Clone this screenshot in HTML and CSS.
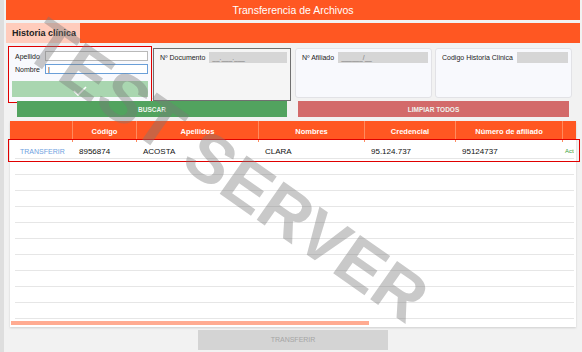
FILE: index.html
```html
<!DOCTYPE html>
<html lang="es">
<head>
  <meta charset="UTF-8">
  <title>Transferencia de Archivos</title>
  <link rel="stylesheet" href="styles.css">
</head>
<body>
  <div class="frame">
    <div class="title-bar">Transferencia de Archivos</div>

    <div class="tab-bar">
      <div class="tab">Historia clínica</div>
    </div>

    <div class="filters">
      <div class="box box-name">
        <label class="field">Apellido <input type="text"></label>
        <label class="field">Nombre <input type="text" class="focused" value="|"></label>
        <div class="ok-bar">
          <svg width="14" height="10" viewBox="0 0 14 10"><path d="M1 5 L5 9 L13 1" fill="none" stroke="#fff" stroke-width="1.6"/></svg>
        </div>
      </div>
      <div class="box box-doc">
        <div class="field">Nº Documento <span class="mask">__.___.___</span></div>
      </div>
      <div class="box">
        <div class="field">Nº Afiliado <span class="mask">______/__</span></div>
      </div>
      <div class="box">
        <div class="field">Codigo Historia Clinica <span class="mask"></span></div>
      </div>
    </div>

    <div class="actions">
      <button class="btn btn-search">BUSCAR</button>
      <button class="btn btn-clear">LIMPIAR TODOS</button>
    </div>

    <div class="grid">
      <div class="grid-head">
        <div></div>
        <div>Código</div>
        <div>Apellidos</div>
        <div>Nombres</div>
        <div>Credencial</div>
        <div>Número de afiliado</div>
        <div></div>
      </div>
      <div class="grid-row selected">
        <div class="link">TRANSFERIR</div>
        <div>8956874</div>
        <div>ACOSTA</div>
        <div>CLARA</div>
        <div>95.124.737</div>
        <div>95124737</div>
        <div class="state">Acti</div>
      </div>
      <div class="empty-row"></div>
      <div class="empty-row"></div>
      <div class="empty-row"></div>
      <div class="empty-row"></div>
      <div class="empty-row"></div>
      <div class="empty-row"></div>
      <div class="empty-row"></div>
      <div class="empty-row"></div>
      <div class="empty-row"></div>
      <div class="empty-row"></div>
      <div class="scrollbar"><div class="thumb"></div></div>
    </div>

    <div class="footer">
      <button class="btn btn-transfer">TRANSFERIR</button>
    </div>
  </div>

  <div class="watermark">TEST SERVER</div>
</body>
</html>
```

FILE: styles.css
```css
/* Page */
body {
  margin: 0;
  background: #f2f2f2;
  font-family: "Liberation Sans", Arial, sans-serif;
  color: #222;
  overflow: hidden;
}

.frame {
  border-left: 4px solid #dedede;
  padding-left: 2px;
  height: 352px;
  box-sizing: border-box;
  position: relative;
}

/* Header */
.title-bar {
  width: 574px;
  height: 20px;
  line-height: 21px;
  background: #ff5722;
  color: #fff;
  text-align: center;
  font-size: 10.5px;
}

.tab-bar {
  width: 574px;
  height: 20px;
  margin-top: 3px;
  background: #ff5722;
  display: flex;
}

.tab {
  width: 68px;
  padding-left: 6px;
  background: #ffccbc;
  font-weight: bold;
  font-size: 9px;
  line-height: 20px;
  color: #222;
  white-space: nowrap;
}

/* Filter boxes */
.filters {
  display: flex;
  align-items: flex-start;
  margin-top: 3px;
  height: 56px;
}

.box {
  width: 137px;
  height: 50px;
  margin-top: 2px;
  margin-right: 3px;
  background: #f8f9fd;
  border: 1px solid #e2e2e6;
  border-radius: 3px;
  padding: 2px 3px;
  box-sizing: border-box;
}

.box-name {
  width: 144px;
  height: 57px;
  margin: 0 1px 0 2px;
  border: 1px solid #e00000;
  border-radius: 0;
  padding: 3px 3px 3px 3px;
}

.box-doc {
  width: 138px;
  height: 53px;
  margin-right: 4px;
  background: #f5f5f5;
  border: 1px solid #707070;
  border-radius: 0;
}

.field {
  display: flex;
  align-items: center;
  gap: 4px;
  font-size: 7px;
  color: #222;
  height: 12px;
  margin-left: 3px;
}

.box-name .field {
  justify-content: space-between;
  margin-bottom: 1px;
}

.field input {
  width: 103px;
  height: 10px;
  border: 1px solid #b9b9b9;
  background: #fff;
  padding: 0 2px;
  font-size: 7px;
  box-sizing: border-box;
}

.field input.focused {
  border-color: #6a9fd8;
  color: #000;
}

.mask {
  flex: 1;
  height: 11px;
  line-height: 11px;
  background: #d6d6d6;
  color: #777;
  padding-left: 3px;
  font-size: 6.5px;
}

.ok-bar {
  margin-top: 6px;
  height: 16px;
  background: #a9d6b0;
  display: flex;
  justify-content: center;
  align-items: flex-end;
  padding-bottom: 1px;
  box-sizing: border-box;
}

/* Buttons */
.actions {
  display: flex;
  padding-left: 11px;
  margin-top: -1px;
}

.btn {
  border: none;
  font-family: "Liberation Sans", Arial, sans-serif;
  font-weight: bold;
  font-size: 6.5px;
  color: #eef3ee;
  height: 16px;
  padding: 0;
}

.btn-search {
  width: 270px;
  background: #52a35f;
}

.btn-clear {
  width: 271px;
  margin-left: 11px;
  background: #d36a6a;
}

/* Grid */
.grid {
  margin: 4px 0 0 4px;
  width: 566px;
  background: #fff;
  box-shadow: 0 1px 2px rgba(0, 0, 0, 0.15);
  padding-bottom: 2px;
}

.grid-head,
.grid-row {
  display: grid;
  grid-template-columns: 63px 64px 122px 106px 91px 107px 1fr;
}

.grid-head {
  height: 19px;
  background: #ff5722;
  color: #fff;
  font-weight: bold;
  font-size: 7.5px;
}

.grid-head div {
  text-align: center;
  line-height: 21px;
  border-right: 1px solid #ff8a5e;
}

.grid-head div:last-child {
  border-right: none;
}

.grid-row {
  position: relative;
  height: 18px;
  margin-left: 5px;
  margin-right: 2px;
  border-bottom: 1px solid #e6e6e6;
  font-size: 8px;
  color: #111;
  grid-template-columns: 58px 64px 122px 106px 91px 107px 1fr;
}

/* red selection frame drawn over the row */
.grid-row.selected::after {
  content: "";
  position: absolute;
  left: -7px;
  right: -6px;
  top: -1px;
  bottom: -4px;
  border: 1px solid #e00000;
  pointer-events: none;
}

.grid-row div {
  padding-left: 6px;
  padding-top: 2px;
  line-height: 19px;
  white-space: nowrap;
  overflow: hidden;
}

.grid-row .link {
  padding-left: 5px;
  color: #6f9fe0;
  font-size: 7px;
}

.grid-row .state {
  padding-left: 2px;
  color: #3aa33a;
  font-size: 6px;
}

.empty-row {
  height: 15px;
  margin: 0 2px 0 5px;
  border-bottom: 1px solid #e6e6e6;
}

.scrollbar {
  margin-top: 2px;
  height: 4px;
  padding-left: 1px;
}

.thumb {
  width: 358px;
  height: 4px;
  background: #ffab91;
}

/* Footer */
.footer {
  padding-left: 192px;
  margin-top: 1px;
}

.btn-transfer {
  width: 190px;
  height: 20px;
  background: #d4d4d4;
  color: #a5a5a5;
  font-weight: normal;
  font-size: 7px;
}

/* Watermark */
.watermark {
  position: absolute;
  left: -6px;
  top: 130px;
  width: 450px;
  text-align: center;
  font-weight: bold;
  font-size: 68px;
  line-height: 68px;
  color: rgba(120, 120, 120, 0.4);
  white-space: nowrap;
  transform: rotate(35deg);
  pointer-events: none;
}
```
